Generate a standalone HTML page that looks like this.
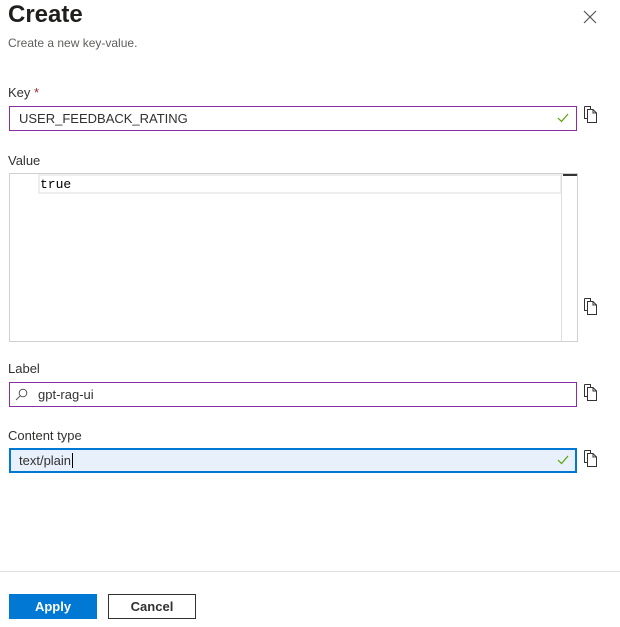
<!DOCTYPE html>
<html><head><style>
*{box-sizing:border-box;margin:0;padding:0}
body{width:620px;height:627px;background:#fff;font-family:"Liberation Sans",sans-serif;color:#323130;position:relative;overflow:hidden}
.a{position:absolute}
.lbl{font-size:13px;color:#323130}
.inp{border:1px solid #8a2da5;height:25px;font-size:13px;padding:4px 9px;background:#fff}
.copy{width:16px;height:20px}
</style></head><body>
<div class="a" style="left:8px;top:1px;font-size:24px;font-weight:bold;color:#201f1e">Create</div>
<svg class="a" style="left:583px;top:10px" width="14" height="14" viewBox="0 0 14 14"><path d="M1 1L13 13M13 1L1 13" stroke="#555" stroke-width="1.2"/></svg>
<div class="a" style="left:8px;top:36px;font-size:12px;color:#605e5c">Create a new key-value.</div>

<div class="a lbl" style="left:8px;top:85px">Key <span style="color:#a4262c">*</span></div>
<div class="a inp" style="left:9px;top:106px;width:568px">USER_FEEDBACK_RATING</div>
<svg class="a" style="left:557px;top:113px" width="12" height="10" viewBox="0 0 12 10"><path d="M1 5L4.5 8.5L11 1" stroke="#57a300" fill="none" stroke-width="1.2"/></svg>

<div class="a lbl" style="left:8px;top:153px">Value</div>
<div class="a" style="left:9px;top:173px;width:569px;height:169px;border:1px solid #d2d0ce"></div>
<div class="a" style="left:38px;top:174px;width:524px;height:20px;border:2px solid #eee;font-family:'Liberation Mono',monospace;font-size:13px;padding:1px 0 0 0;color:#000">true</div>
<div class="a" style="left:561px;top:174px;width:1px;height:167px;background:#ddd"></div>
<div class="a" style="left:563px;top:174px;width:14px;height:2px;background:#333"></div>

<div class="a lbl" style="left:8px;top:361px">Label</div>
<div class="a inp" style="left:9px;top:382px;width:568px;padding-left:28px">gpt-rag-ui</div>
<svg class="a" style="left:15px;top:388px" width="13" height="13" viewBox="0 0 13 13"><circle cx="8" cy="5" r="3.8" stroke="#555" fill="none"/><path d="M5.3 7.7L1 12" stroke="#555"/></svg>

<div class="a lbl" style="left:8px;top:428px">Content type</div>
<div class="a inp" style="left:9px;top:448px;width:568px;border:2px solid #0078d4;background:#e8f0fb;padding:3px 8px">text/plain<span style="border-left:1px solid #000;margin-left:1px"></span></div>
<svg class="a" style="left:557px;top:455px" width="12" height="10" viewBox="0 0 12 10"><path d="M1 5L4.5 8.5L11 1" stroke="#57a300" fill="none" stroke-width="1.2"/></svg>

<svg width="0" height="0" style="position:absolute"><defs><g id="cp"><path d="M1.5 1.5H7.5V4M1.5 1.5V13.5H4.5" stroke="#333" fill="none"/><path d="M4.5 4.5H10L13.5 8V17.5H4.5Z" stroke="#333" fill="#fff"/><path d="M10 4.5V8H13.5" stroke="#333" fill="none"/></g></defs></svg>
<svg class="a" style="left:583px;top:105px" width="16" height="20"><use href="#cp"/></svg>
<svg class="a" style="left:583px;top:297px" width="16" height="20"><use href="#cp"/></svg>
<svg class="a" style="left:583px;top:383px" width="16" height="20"><use href="#cp"/></svg>
<svg class="a" style="left:583px;top:449px" width="16" height="20"><use href="#cp"/></svg>

<div class="a" style="left:0;top:571px;width:620px;height:1px;background:#e1dfdd"></div>
<div class="a" style="left:9px;top:594px;width:88px;height:25px;background:#0078d4;color:#fff;font-size:13px;font-weight:bold;text-align:center;line-height:25px">Apply</div>
<div class="a" style="left:108px;top:594px;width:88px;height:25px;border:1px solid #323130;color:#323130;font-size:13px;font-weight:bold;text-align:center;line-height:23px">Cancel</div>
</body></html>
